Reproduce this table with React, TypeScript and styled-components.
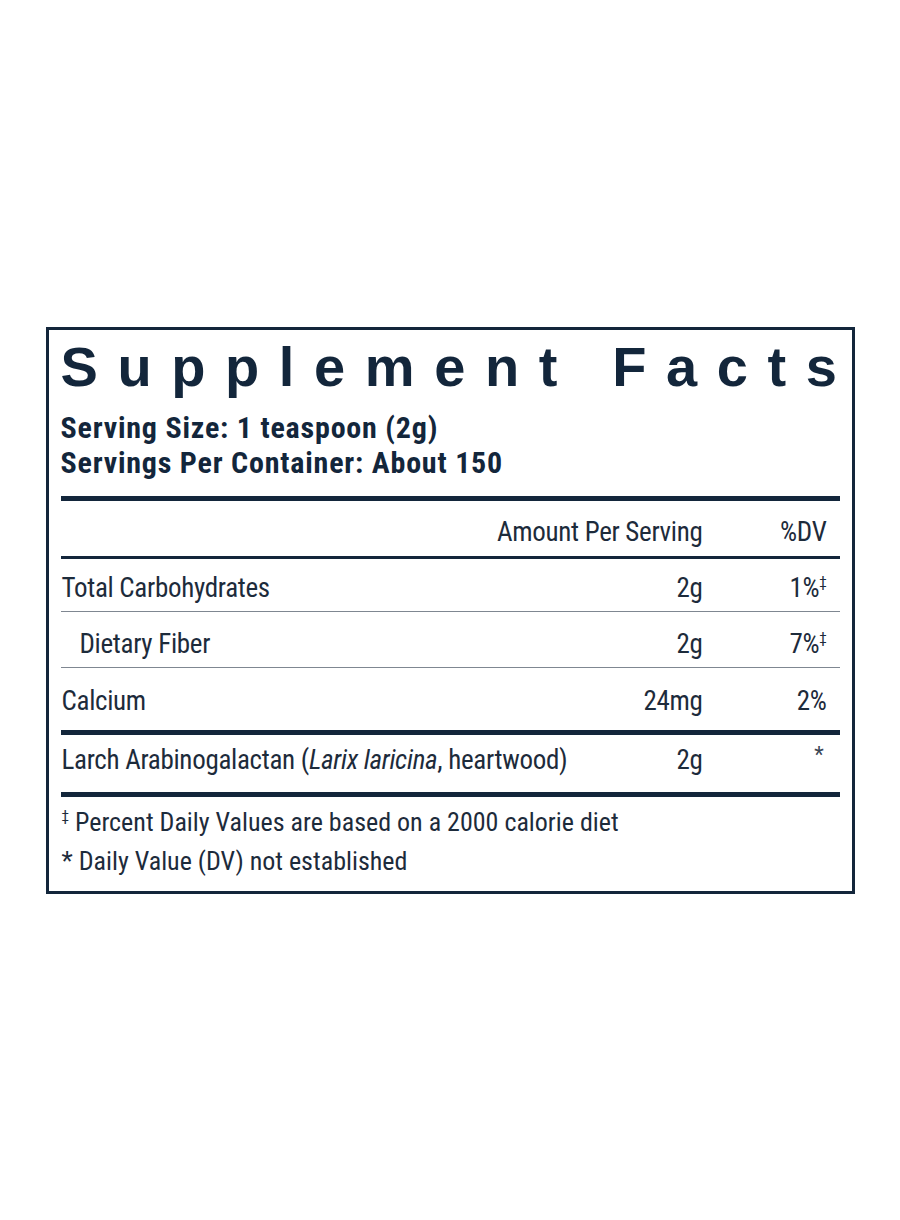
import React from "react";
import styled, { createGlobalStyle } from "styled-components";

const GlobalStyle = createGlobalStyle`
  body {
    margin: 0;
    background: #ffffff;
  }
`;

const navy = "#13263b";
const ink = "#1d2b3b";
const narrow = `"Roboto Condensed", "DejaVu Sans Condensed", sans-serif`;

const Page = styled.main`
  min-height: 1220px;
  display: flex;
  align-items: center;
  justify-content: center;
`;

const Panel = styled.section`
  box-sizing: border-box;
  width: 809px;
  border: 3px solid ${navy};
  padding: 9px 12px 10px;
  color: ${ink};
`;

const Title = styled.h1`
  margin: 0;
  font-family: "Liberation Sans", Arial, sans-serif;
  font-weight: 700;
  font-size: 56px;
  line-height: 56px;
  letter-spacing: 19.6px;
  color: ${navy};
  white-space: nowrap;
`;

const Serving = styled.p`
  margin: 15px 0 0;
  font-family: ${narrow};
  font-weight: 700;
  font-size: 30px;
  line-height: 35px;
  letter-spacing: 0.8px;
  color: ${navy};
  white-space: nowrap;
`;

const Table = styled.div`
  margin-top: 16px;
  border-top: 5px solid ${navy};
  font-family: ${narrow};
  font-size: 27px;
  letter-spacing: -0.3px;
`;

const Grid = styled.div`
  display: grid;
  grid-template-columns: minmax(0, 1fr) 260px 124px;
  align-items: center;
  box-sizing: border-box;
`;

const HeadRow = styled(Grid)`
  height: 58px;
  padding-top: 7px;
  border-bottom: 3px solid ${navy};
`;

const Row = styled(Grid)<{ $h: number; $pt: number; $rule: "thin" | "thick" }>`
  height: ${(p) => p.$h + (p.$rule === "thick" ? 5 : 1)}px;
  padding-top: ${(p) => p.$pt}px;
  padding-bottom: ${(p) => (p.$pt === 0 ? 7 : 0)}px;
  border-bottom: ${(p) => (p.$rule === "thick" ? `5px solid ${navy}` : "1px solid #7f8791")};
`;

const Cell = styled.div<{ $right?: boolean; $indent?: boolean }>`
  line-height: 34px;
  white-space: nowrap;
  text-align: ${(p) => (p.$right ? "right" : "left")};
  padding-right: ${(p) => (p.$right ? 13 : 0)}px;
  padding-left: ${(p) => (p.$indent ? 19 : 1)}px;

  em {
    font-style: italic;
  }
`;

const Sup = styled.span`
  font-size: 15px;
  vertical-align: 10px;
  line-height: 0;
`;

const Star = styled.span`
  display: inline-block;
  font-size: 22px;
  color: #3a4756;
  transform: translate(-3px, -6px);
`;

const Notes = styled.div`
  margin-top: 6px;
  font-family: ${narrow};
  font-size: 26px;
  line-height: 39px;
`;

const Note = styled.div`
  padding-left: 1px;
  white-space: nowrap;
`;

type Item = {
  name: React.ReactNode;
  amount: string;
  dv: React.ReactNode;
  indent?: boolean;
  h: number;
  pt: number;
  rule: "thin" | "thick";
};

const items: Item[] = [
  { name: "Total Carbohydrates", amount: "2g", dv: <>1%<Sup>‡</Sup></>, h: 52, pt: 6, rule: "thin" },
  { name: "Dietary Fiber", amount: "2g", dv: <>7%<Sup>‡</Sup></>, indent: true, h: 55, pt: 10, rule: "thin" },
  { name: "Calcium", amount: "24mg", dv: "2%", h: 62, pt: 4, rule: "thick" },
  {
    name: (
      <>
        Larch Arabinogalactan (<em>Larix laricina</em>, heartwood)
      </>
    ),
    amount: "2g",
    dv: <Star>*</Star>,
    h: 57,
    pt: 0,
    rule: "thick",
  },
];

export default function App() {
  return (
    <>
      <GlobalStyle />
      <Page>
        <Panel>
          <Title>Supplement Facts</Title>
          <Serving>
            Serving Size: 1 teaspoon (2g)
            <br />
            Servings Per Container: About 150
          </Serving>

          <Table>
            <HeadRow>
              <Cell />
              <Cell $right>Amount Per Serving</Cell>
              <Cell $right>%DV</Cell>
            </HeadRow>
            {items.map((it, i) => (
              <Row key={i} $h={it.h} $pt={it.pt} $rule={it.rule}>
                <Cell $indent={it.indent}>{it.name}</Cell>
                <Cell $right>{it.amount}</Cell>
                <Cell $right>{it.dv}</Cell>
              </Row>
            ))}
          </Table>

          <Notes>
            <Note>
              <Sup>‡</Sup> Percent Daily Values are based on a 2000 calorie diet
            </Note>
            <Note>* Daily Value (DV) not established</Note>
          </Notes>
        </Panel>
      </Page>
    </>
  );
}
